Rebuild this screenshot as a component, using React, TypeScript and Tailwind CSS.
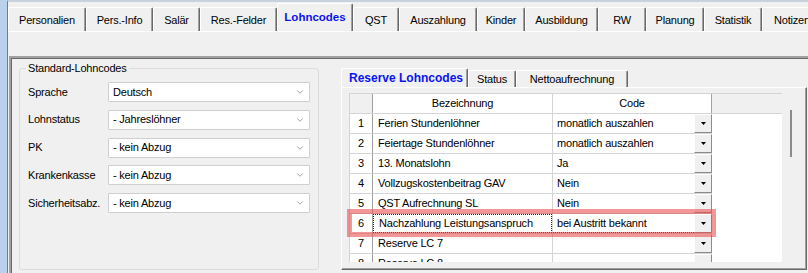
import { ChevronDown } from 'lucide-react'

const outerTabs = [
  { label: 'Personalien', w: 'w-[78px]' },
  { label: 'Pers.-Info', w: 'w-[67px]' },
  { label: 'Salär', w: 'w-[47px]' },
  { label: 'Res.-Felder', w: 'w-[77px]' },
  { label: 'Lohncodes', w: 'w-[76px]', active: true },
  { label: 'QST', w: 'w-[46px]' },
  { label: 'Auszahlung', w: 'w-[78px]' },
  { label: 'Kinder', w: 'w-[48px]' },
  { label: 'Ausbildung', w: 'w-[73px]' },
  { label: 'RW', w: 'w-[48px]' },
  { label: 'Planung', w: 'w-[58px]' },
  { label: 'Statistik', w: 'w-[58px]' },
  { label: 'Notizen', w: 'w-[60px]' },
]

const fields = [
  { label: 'Sprache', value: 'Deutsch' },
  { label: 'Lohnstatus', value: '- Jahreslöhner' },
  { label: 'PK', value: '- kein Abzug' },
  { label: 'Krankenkasse', value: '- kein Abzug' },
  { label: 'Sicherheitsabz.', value: '- kein Abzug' },
]

const rows = [
  { nr: 1, name: 'Ferien Stundenlöhner', code: 'monatlich auszahlen' },
  { nr: 2, name: 'Feiertage Stundenlöhner', code: 'monatlich auszahlen' },
  { nr: 3, name: '13. Monatslohn', code: 'Ja' },
  { nr: 4, name: 'Vollzugskostenbeitrag GAV', code: 'Nein' },
  { nr: 5, name: 'QST Aufrechnung SL', code: 'Nein' },
  { nr: 6, name: 'Nachzahlung Leistungsanspruch', code: 'bei Austritt bekannt', focus: true },
  { nr: 7, name: 'Reserve LC 7', code: '' },
  { nr: 8, name: 'Reserve LC 8', code: '' },
]

function DropButton() {
  return (
    <div className="w-[18px] h-full shrink-0 bg-[#f0f0f0] border border-t-white border-l-white border-r-[#8c8c8c] border-b-[#8c8c8c] flex items-center justify-center">
      <svg width="5" height="3" viewBox="0 0 5 3">
        <polygon points="0,0 5,0 2.5,3" fill="#000" />
      </svg>
    </div>
  )
}

export default function App() {
  return (
    <div className="w-[808px] h-[273px] overflow-hidden flex bg-[#b9d1ea] font-['Liberation_Sans',Arial,sans-serif] text-[11px] tracking-[-0.2px] text-black leading-[13px]">
      <div className="w-[7px] shrink-0" />
      <div className="flex-1 flex flex-col bg-[#f0f0f0] border-l border-[#7a7a7a] border-t-2 border-t-[#c8d2de]">
        {/* outer tab strip */}
        <div className="h-[29px] flex items-end shrink-0">
          {outerTabs.map((t) =>
            t.active ? (
              <div
                key={t.label}
                className={`${t.w} h-[28px] shrink-0 bg-[#f0f0f0] border-t border-l border-white border-r border-r-[#696969] shadow-[inset_-1px_0_0_#a0a0a0] rounded-t-[2px] text-center pt-[7px] font-bold text-[11.5px] tracking-normal text-[#0a14f0]`}
              >
                {t.label}
              </div>
            ) : (
              <div
                key={t.label}
                className={`${t.w} h-[24px] shrink-0 border-t border-l border-white border-r border-r-[#696969] shadow-[inset_-1px_0_0_#a0a0a0] rounded-t-[2px] text-center pt-[6px]`}
              >
                {t.label}
              </div>
            )
          )}
        </div>

        {/* outer tab page */}
        <div className="flex-1 border-t border-white pt-[24px] pl-[1px]">
          <div className="h-full border-t-2 border-l-2 border-[#a0a0a0] shadow-[inset_1px_1px_0_#696969] pt-[4px] pl-[8px] flex items-start">
            <fieldset className="w-[299px] h-[208px] shrink-0 border border-[#dcdcdc] rounded-[3px] px-[8px]">
              <legend className="-ml-[2px] px-[2px] leading-[12px]">Standard-Lohncodes</legend>
              <div className="mt-[8px] flex flex-col gap-[7.75px]">
                {fields.map((f) => (
                  <div key={f.label} className="flex items-center h-[20px]">
                    <span className="w-[80px] shrink-0">{f.label}</span>
                    <div className="w-[202px] h-[20px] bg-white border border-[#cfcfcf] rounded-[1px] flex items-center justify-between pl-[4px] pr-[4px]">
                      <span>{f.value}</span>
                      <ChevronDown size={10} strokeWidth={1.5} className="text-[#6b6b6b]" />
                    </div>
                  </div>
                ))}
              </div>
            </fieldset>

            {/* inner tab control */}
            <div className="ml-[22px] mt-[6px] w-[466px] shrink-0">
              <div className="h-[19px] flex items-end">
                <div className="w-[127px] h-[19px] shrink-0 border-t border-l border-white border-r border-r-[#696969] shadow-[inset_-1px_0_0_#a0a0a0] rounded-t-[2px] pl-[7px] pt-[3px] font-bold text-[12px] tracking-normal text-[#0a14f0]">
                  Reserve Lohncodes
                </div>
                <div className="w-[48px] h-[17px] shrink-0 border-t border-l border-white border-r border-r-[#696969] shadow-[inset_-1px_0_0_#a0a0a0] rounded-t-[2px] text-center pt-[2px]">
                  Status
                </div>
                <div className="w-[112px] h-[17px] shrink-0 border-t border-l border-white border-r border-r-[#696969] shadow-[inset_-1px_0_0_#a0a0a0] rounded-t-[2px] text-center pt-[2px]">
                  Nettoaufrechnung
                </div>
              </div>

              <div className="h-[183px] border-t border-l border-white border-r border-b border-r-[#696969] border-b-[#696969] shadow-[inset_-1px_-1px_0_#a0a0a0] pl-[7px] pt-[5px]">
                <div className="relative flex">
                  {/* grid */}
                  <div className="w-[433px] h-[169px] shrink-0 bg-white overflow-hidden border-t border-l border-[#d4d4d4]">
                    <div className="h-[20px] flex bg-[#f0f0f0] border-b border-[#d4d4d4]">
                      <div className="w-[23px] shrink-0 border-r border-[#a0a0a0]" />
                      <div className="w-[180px] shrink-0 bg-white border-r border-[#d4d4d4] flex items-center justify-center">
                        Bezeichnung
                      </div>
                      <div className="w-[159px] shrink-0 bg-white border-r border-[#a0a0a0] flex items-center justify-center">
                        Code
                      </div>
                    </div>
                    {rows.map((r) => (
                      <div key={r.nr} className="h-[20px] flex">
                        <div className="w-[23px] shrink-0 border-r border-[#a0a0a0] border-b border-b-[#d4d4d4] flex items-center justify-center">
                          {r.nr}
                        </div>
                        <div className="w-[180px] shrink-0 border-r border-b border-[#d4d4d4] flex">
                          <div
                            className={`flex-1 flex items-center pl-[5px] ${r.focus ? 'border border-dotted border-[#222]' : ''}`}
                          >
                            {r.name}
                          </div>
                        </div>
                        <div className="w-[159px] shrink-0 border-b border-[#d4d4d4] flex">
                          <div
                            className={`flex-1 flex items-center pl-[4px] ${r.focus ? 'border-b border-dotted border-[#222]' : ''}`}
                          >
                            {r.code}
                          </div>
                          <DropButton />
                        </div>
                      </div>
                    ))}
                  </div>
                  {/* scrollbar */}
                  <div className="w-[22px] h-[169px] shrink-0 pl-[8px] pt-[17px]">
                    <div className="w-[2px] h-[47px] bg-[#8a8a8a]" />
                  </div>

                  {/* highlight marker */}
                  <div className="absolute left-[-2px] top-[116px] w-[369px] h-[28px] border-[5px] border-[rgba(232,76,76,0.58)] pointer-events-none" />
                </div>
              </div>
            </div>
          </div>
        </div>
      </div>
    </div>
  )
}
